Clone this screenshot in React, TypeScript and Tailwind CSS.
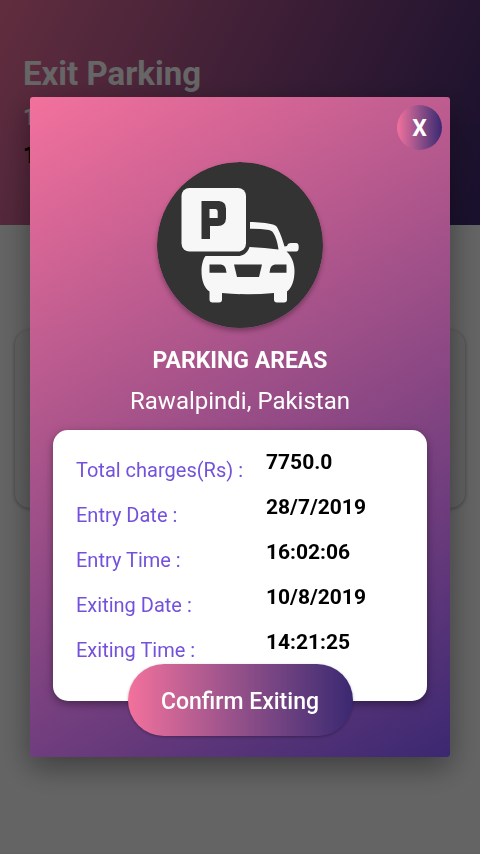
import { useState } from "react";

const details = [
  { label: "Total charges(Rs) :", value: "7750.0" },
  { label: "Entry Date :", value: "28/7/2019" },
  { label: "Entry Time :", value: "16:02:06" },
  { label: "Exiting Date :", value: "10/8/2019" },
  { label: "Exiting Time :", value: "14:21:25" },
];

function ParkingLogo() {
  return (
    <svg
      viewBox="7 7 166 166"
      className="size-[166px] rounded-full shadow-[0_3px_5px_rgba(0,0,0,0.3)]"
      role="img"
      aria-label="Parking"
    >
      <circle cx="90" cy="90" r="83" fill="#333333" />
      <g fill="#f7f7f7">
        <rect x="31.5" y="33" width="64.5" height="63.5" rx="8" />
        {/* roof, right pillar, mirror, body and wheels */}
        <path d="M100 67 C108 67 117 68 123 69.5 C125.500 70.200 127 71.500 128 74 C130.500 79 133 86 134.500 91.500 L137 91 C137.500 89 139 88 141 88 L146 88 C148 88 148.700 89.500 148.700 92 C148.700 95 148 96.500 146 96.500 L136.500 96.500 C141 100 144.500 108 144.500 116 C144.500 125 142 133 137 136.500 L137 144.500 C137 146.500 136 147.500 134 147.500 L127 147.500 C125 147.500 124 146.500 124 144.500 L124 138 Q98 140.500 72 138 L72 144.500 C72 146.500 71 147.500 69 147.500 L62.500 147.500 C60.500 147.500 59.500 146.500 59.500 144.500 L59.500 136.500 C54 133 51.500 125 51.500 116 C51.500 110 53 104 55.500 101 L88 101 C94 101 98 97 99.500 92 Q115 92.500 128.500 94.500 C127.500 87 125.500 81 123 77.500 C122 76 121 75.500 119 75 Q110 73.500 100 73.700 Z" />
      </g>
      <g fill="#333333">
        <path
          fillRule="evenodd"
          d="M51.500 46 H69 Q76 46.500 76 53.500 V63.500 Q75.500 71 68 71 H60 V84 H51.500 Z M59.500 54 V63 H67.700 V56.500 Q67.700 54.200 65.500 54 Z"
        />
        <path d="M59.500 109.500 H71 Q76 110 76.500 117.700 H59.500 Z" />
        <path d="M136.500 109.500 H125 Q120 110 119.500 117.700 H136.500 Z" />
        <path d="M84 109.500 H112 L109 122 H87 Z" />
      </g>
    </svg>
  );
}

function ExitPage() {
  return (
    <main className="min-h-screen bg-[#fafafa]">
      <header className="h-[225px] bg-linear-[115deg,#f3719c,#3b2871] px-[23px] pt-[54px]">
        <h1 className="text-[33px] leading-10 font-bold text-white">Exit Parking</h1>
        <p className="mt-1 text-[23px] leading-10 font-bold text-white">10/8/2019</p>
        <p className="text-[23px] leading-9 font-bold text-black">14:21:25</p>
      </header>
      <section className="mx-[15px] mt-[105px] h-[178px] rounded-[15px] bg-[#f0f0f0] shadow-[0_1px_4px_rgba(0,0,0,0.35)]" />
    </main>
  );
}

export default function App() {
  const [open, setOpen] = useState(true);

  return (
    <div className="font-[Roboto,sans-serif]">
      <ExitPage />
      {open && (
        <div className="fixed inset-0 flex items-center justify-center bg-black/60 px-[30px]">
          <div
            role="dialog"
            aria-modal="true"
            aria-labelledby="area-name"
            className="flex w-full flex-col items-center rounded-[3px] bg-linear-[148deg,#f3719c,#3b2871] px-[23px] pb-[21px] shadow-[0_10px_30px_rgba(0,0,0,0.4)]"
          >
            <button
              type="button"
              aria-label="X"
              onClick={() => setOpen(false)}
              className="mt-2 -mr-[15px] size-[45px] self-end rounded-full bg-linear-to-r from-[#f3719c] to-[#3b2871] pt-1 text-[23px] font-bold text-white"
            >
              X
            </button>
            <div className="mt-3">
              <ParkingLogo />
            </div>
            <h2 id="area-name" className="mt-[17px] text-[23px] leading-8 font-bold text-white">
              PARKING AREAS
            </h2>
            <p className="mt-2 text-[24px] leading-8 text-white">Rawalpindi, Pakistan</p>
            <dl className="mt-[13px] w-full rounded-[15px] bg-white px-[23px] pt-5 pb-[26px] shadow-[0_3px_8px_rgba(0,0,0,0.4)]">
              {details.map((item) => (
                <div key={item.label} className="flex h-[45px] items-start">
                  <dt className="w-[190px] pt-2 text-[20px] leading-6 text-[#7351dd]">{item.label}</dt>
                  <dd className="text-[21px] leading-6 font-bold text-black">{item.value}</dd>
                </div>
              ))}
            </dl>
            <button
              type="button"
              onClick={() => setOpen(false)}
              className="-mt-[37px] h-[72px] w-[225px] rounded-full bg-linear-to-r from-[#f3719c] to-[#3b2871] pt-1 text-[23px] font-medium text-white shadow-[0_1px_3px_rgba(0,0,0,0.3)]"
            >
              Confirm Exiting
            </button>
          </div>
        </div>
      )}
    </div>
  );
}
